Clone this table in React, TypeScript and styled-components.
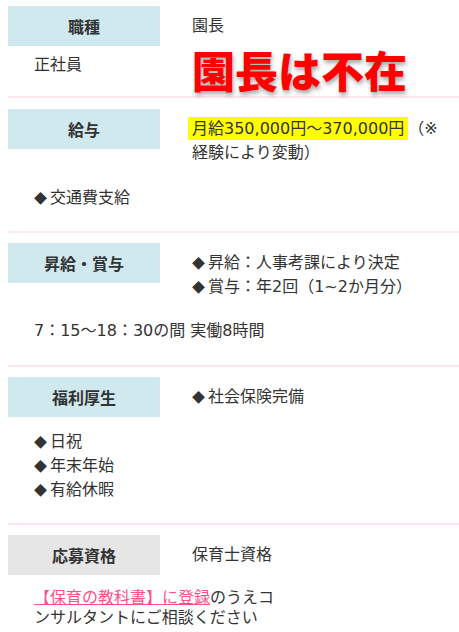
import React from "react"
import styled, { createGlobalStyle } from "styled-components"

const GlobalStyle = createGlobalStyle`
  html, body {
    margin: 0;
    padding: 0;
    background: #fff;
  }
  body {
    font-family: "DejaVu Sans", "Noto Sans CJK JP", sans-serif;
    font-size: 16px;
    line-height: 24px;
    color: #333;
  }
`

const labelBlue = "#cfe9ee"
const labelGray = "#e6e6e6"
const rule = "#fde7ee"

const StyledPage = styled.div`
  padding-left: 8px;
  width: 451px;
  overflow: hidden;
`

const StyledSection = styled.section<{ $top: number; $bottom: number }>`
  display: grid;
  grid-template-columns: 184px 1fr;
  padding: ${p => p.$top}px 0 ${p => p.$bottom}px;
  border-bottom: 2px solid ${rule};

  &:last-child {
    border-bottom: none;
  }
`

const StyledLabel = styled.div<{ $gray?: boolean }>`
  width: 152px;
  height: 40px;
  display: flex;
  align-items: center;
  justify-content: center;
  background-color: ${p => (p.$gray ? labelGray : labelBlue)};
  font-family: "Noto Sans CJK JP", sans-serif;
  font-weight: 700;
  color: #333;
`

const StyledValue = styled.div`
  padding-top: 8px;
  white-space: nowrap;
`

const StyledSide = styled.div`
  padding: 7px 0 0 26px;
`

const StyledBanner = styled.div`
  margin-top: 1px;
  font-family: "Noto Sans CJK JP", sans-serif;
  font-size: 43px;
  line-height: 44px;
  font-weight: 900;
  color: #ff0000;
  white-space: nowrap;
  -webkit-text-stroke: 4px #fff;
  paint-order: stroke fill;
  text-shadow: 1px 3px 4px rgba(0, 0, 0, 0.35);
`

const StyledExtra = styled.div<{ $gap: number; $line?: number }>`
  grid-column: 1 / -1;
  margin-top: ${p => p.$gap}px;
  padding-left: 26px;
  line-height: ${p => p.$line ?? 24}px;
`

const StyledBullet = styled.span`
  font-family: "Noto Sans CJK JP", sans-serif;
  font-size: 13px;
  display: inline-block;
  width: 16px;
`

const StyledHighlight = styled.span`
  background-color: #ffff00;
  margin-left: -4px;
  padding: 2px 4px;
`

const StyledNote = styled.div`
  width: 252px;
`

const StyledLink = styled.a`
  color: #ff4f86;
  text-decoration: underline;
  text-decoration-thickness: 1px;
  text-underline-offset: 1px;
`

const Item = ({ children }: { children: React.ReactNode }) => (
  <div>
    <StyledBullet>◆</StyledBullet>
    {children}
  </div>
)

const App = () => {
  return (
    <StyledPage>
      <GlobalStyle />

      <StyledSection $top={6} $bottom={5}>
        <StyledLabel>職種</StyledLabel>
        <StyledValue>園長</StyledValue>
        <StyledSide>正社員</StyledSide>
        <StyledBanner>園長は不在</StyledBanner>
      </StyledSection>

      <StyledSection $top={11} $bottom={21}>
        <StyledLabel>給与</StyledLabel>
        <StyledValue>
          <StyledHighlight>月給350,000円～370,000円</StyledHighlight>（※
          <br />
          経験により変動）
        </StyledValue>
        <StyledExtra $gap={21}>
          <Item>交通費支給</Item>
        </StyledExtra>
      </StyledSection>

      <StyledSection $top={10} $bottom={22}>
        <StyledLabel>昇給・賞与</StyledLabel>
        <StyledValue>
          <Item>昇給：人事考課により決定</Item>
          <Item>賞与：年2回（1~2か月分）</Item>
        </StyledValue>
        <StyledExtra $gap={20}>7：15～18：30の間 実働8時間</StyledExtra>
      </StyledSection>

      <StyledSection $top={10} $bottom={21}>
        <StyledLabel>福利厚生</StyledLabel>
        <StyledValue>
          <Item>社会保険完備</Item>
        </StyledValue>
        <StyledExtra $gap={13}>
          <Item>日祝</Item>
          <Item>年末年始</Item>
          <Item>有給休暇</Item>
        </StyledExtra>
      </StyledSection>

      <StyledSection $top={10} $bottom={12}>
        <StyledLabel $gray>応募資格</StyledLabel>
        <StyledValue>保育士資格</StyledValue>
        <StyledExtra $gap={13} $line={20}>
          <StyledNote>
            <StyledLink href="#">【保育の教科書】に登録</StyledLink>
            のうえコンサルタントにご相談ください
          </StyledNote>
        </StyledExtra>
      </StyledSection>
    </StyledPage>
  )
}

export default App
